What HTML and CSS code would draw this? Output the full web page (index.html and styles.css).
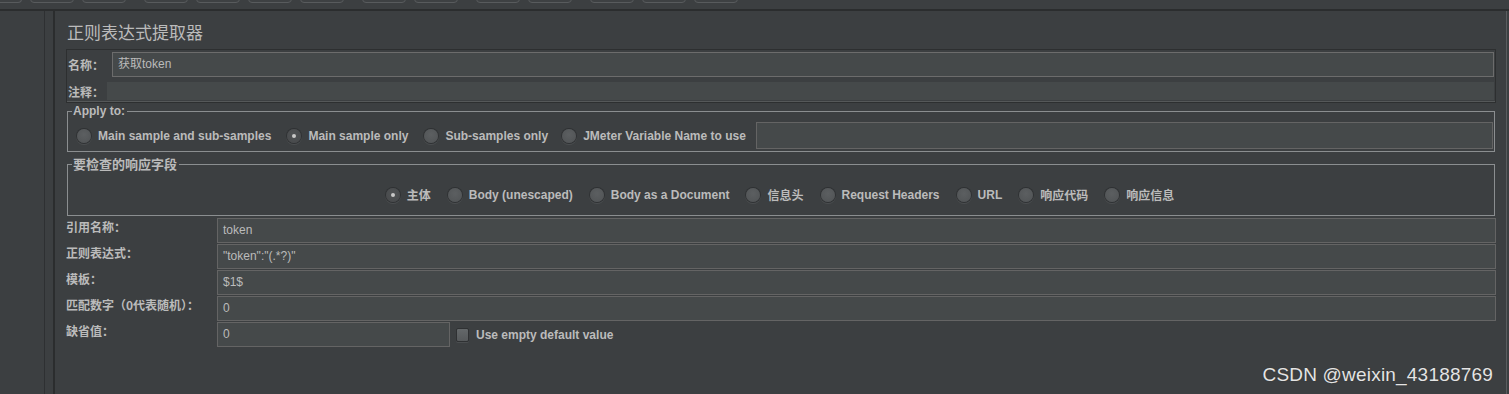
FILE: index.html
```html
<!DOCTYPE html>
<html lang="zh">
<head>
<meta charset="utf-8">
<title>正则表达式提取器</title>
<link rel="stylesheet" href="styles.css">
</head>
<body>
<div class="toolbar">
  <span class="tb first"></span>
  <span class="tb"></span>
  <span class="tb"></span>
  <span class="tb grp"></span>
  <span class="tb"></span>
  <span class="tb"></span>
  <span class="tb"></span>
  <span class="tb grp"></span>
  <span class="tb"></span>
  <span class="tb grp"></span>
  <span class="tb"></span>
  <span class="tb grp"></span>
  <span class="tb"></span>
  <span class="tb"></span>
</div>
<div class="hsep"></div>
<div class="workspace">
  <div class="tree"></div>
  <div class="split"></div>
  <div class="main">
    <div class="title">正则表达式提取器</div>

    <div class="namebox">
      <div class="nrow">
        <span class="nlabel">名称：</span>
        <div class="field namefield">获取token</div>
      </div>
      <div class="nrow crow">
        <span class="nlabel clabel">注释：</span>
        <div class="field commentfield"></div>
      </div>
    </div>

    <fieldset class="group apply">
      <legend>Apply to:</legend>
      <div class="opts">
        <span class="opt"><span class="radio"></span>Main sample and sub-samples</span>
        <span class="opt"><span class="radio on"></span>Main sample only</span>
        <span class="opt"><span class="radio"></span>Sub-samples only</span>
        <span class="opt"><span class="radio"></span>JMeter Variable Name to use</span>
        <div class="field varfield"></div>
      </div>
    </fieldset>

    <fieldset class="group fields">
      <legend class="cjk">要检查的响应字段</legend>
      <div class="opts center">
        <span class="opt"><span class="radio on"></span><span class="cjk">主体</span></span>
        <span class="opt"><span class="radio"></span>Body (unescaped)</span>
        <span class="opt"><span class="radio"></span>Body as a Document</span>
        <span class="opt"><span class="radio"></span><span class="cjk">信息头</span></span>
        <span class="opt"><span class="radio"></span>Request Headers</span>
        <span class="opt"><span class="radio"></span>URL</span>
        <span class="opt"><span class="radio"></span><span class="cjk">响应代码</span></span>
        <span class="opt"><span class="radio"></span><span class="cjk">响应信息</span></span>
      </div>
    </fieldset>

    <div class="form">
      <span class="flabel">引用名称：</span>
      <div class="field">token</div>
      <span class="flabel">正则表达式：</span>
      <div class="field">"token":"(.*?)"</div>
      <span class="flabel">模板：</span>
      <div class="field">$1$</div>
      <span class="flabel">匹配数字（0代表随机）：</span>
      <div class="field">0</div>
      <span class="flabel">缺省值：</span>
      <div class="lastrow">
        <div class="field shortfield">0</div>
        <span class="check"></span>
        <span class="checktext">Use empty default value</span>
      </div>
    </div>
  </div>
</div>
<div class="watermark">CSDN @weixin_43188769</div>
</body>
</html>
```

FILE: styles.css
```css
html, body {
  margin: 0;
  padding: 0;
}
body {
  width: 1509px;
  height: 394px;
  overflow: hidden;
  background: #3c3f41;
  color: #bbbbbb;
  font-family: "Liberation Sans", Arial, "Noto Sans CJK SC", sans-serif;
  font-size: 12px;
  position: relative;
}

.toolbar {
  height: 9px;
  display: flex;
  gap: 8px;
  overflow: hidden;
}
.tb {
  flex: none;
  width: 44px;
  height: 14px;
  margin-top: -11px;
  box-sizing: border-box;
  border: 1px solid #585b5d;
  border-radius: 4px;
  background: #3e4143;
}
.tb.first {
  width: 23px;
  margin-left: -1px;
  border-left: none;
  border-top-left-radius: 0;
  border-bottom-left-radius: 0;
}
.tb.grp {
  margin-left: 10px;
}
.hsep {
  height: 2px;
  background: #2b2d2e;
}

.workspace {
  display: flex;
  height: 383px;
}
.tree {
  width: 44px;
  flex: none;
  border-right: 1px solid #2e3032;
}
.split {
  width: 8px;
  flex: none;
}
.main {
  flex: 1;
  margin-right: 2px;
  border-left: 2px solid #2b2d2e;
  border-right: 1px solid #5a5d5f;
  padding: 0 10px 0 11px;
}

.title {
  padding-top: 3px;
  height: 35px;
  line-height: 35px;
  font-size: 17px;
  font-family: "Noto Sans CJK SC", sans-serif;
  color: #bbbbbb;
  padding-left: 1px;
}

.cjk {
  font-family: "Noto Sans CJK SC", sans-serif;
}

.namebox {
  border: 1px solid #2d2f30;
  box-shadow: inset 0 -1px 0 #555859;
  padding: 2px 1px 2px 0;
}
.nrow {
  display: flex;
  align-items: center;
  height: 25px;
}
.crow {
  height: 18px;
  margin-top: 5px;
}
.nlabel {
  width: 45px;
  flex: none;
  font-family: "Noto Sans CJK SC", sans-serif;
  font-weight: bold;
  font-size: 12px;
  padding-left: 1px;
  box-sizing: border-box;
}
.clabel {
  width: 40px;
}

.field {
  box-sizing: border-box;
  height: 25px;
  line-height: 23px;
  background: #45494a;
  border: 1px solid #646464;
  padding-left: 5px;
  color: #bbbbbb;
  font-size: 12px;
  font-family: "Liberation Sans", Arial, "Noto Sans CJK SC", sans-serif;
  white-space: nowrap;
}
.namefield {
  flex: 1;
  border-color: #6c6c6c;
  padding-left: 5px;
}
.commentfield {
  flex: 1;
  height: 18px;
  border: none;
}

.group {
  margin: 1px 1px 0 1px;
  border: 1px solid #8b8e90;
  padding: 0 1px 2px 9px;
  min-width: 0;
}
.group legend {
  margin-left: -5px;
  padding: 0 2px 0 1px;
  font-weight: bold;
  font-size: 12px;
  line-height: 14px;
  color: #bbbbbb;
}
.group legend.cjk {
  font-size: 13px;
}
.apply .opts {
  margin-top: 4px;
}
.opts {
  display: flex;
  align-items: center;
  gap: 16px;
  font-weight: bold;
  white-space: nowrap;
}
.apply .opts .opt:nth-child(4) {
  margin-left: -2px;
}
.opts.center {
  justify-content: center;
  padding: 15px 10px 10px 0;
  gap: 17px;
}
.opt {
  display: flex;
  align-items: center;
  gap: 7px;
}
.radio {
  width: 14px;
  height: 14px;
  box-sizing: border-box;
  border-radius: 50%;
  background: radial-gradient(circle at 50% 40%, #5c5f61 0%, #535658 70%, #4a4d4f 100%);
  box-shadow: 0 0 0 1px #2f3133, 0 1px 0 1px #4b4e50;
  position: relative;
  flex: none;
}
.radio.on {
  background: radial-gradient(circle at 50% 40%, #4f5254 0%, #47494b 100%);
}
.radio.on::after {
  content: "";
  position: absolute;
  left: 5px;
  top: 5px;
  width: 4px;
  height: 4px;
  border-radius: 50%;
  background: #c8c8c8;
}
.varfield {
  flex: 1;
  height: 27px;
  margin-left: -6px;
}

.fields {
  margin-top: 5px;
}

.form {
  margin-top: 2px;
  display: grid;
  grid-template-columns: 151px 1fr;
  grid-auto-rows: 25px;
  row-gap: 1px;
}
.flabel {
  font-family: "Noto Sans CJK SC", sans-serif;
  font-weight: bold;
  font-size: 12px;
  line-height: 17px;
  white-space: nowrap;
}
.lastrow {
  display: flex;
  align-items: center;
}
.shortfield {
  width: 233px;
}
.check {
  width: 13px;
  height: 14px;
  margin-left: 6px;
  box-sizing: border-box;
  border-radius: 2px;
  background: linear-gradient(#64686a, #56595b);
  border: 1px solid #2f3133;
  box-shadow: 0 1px 0 #4b4e50;
}
.checktext {
  margin-left: 7px;
  font-weight: bold;
}

.watermark {
  position: absolute;
  right: 16px;
  top: 364px;
  font-family: "Liberation Sans", Arial, sans-serif;
  font-size: 19px;
  color: #e4e4e4;
  text-shadow: 0 0 1px #2a2a2a;
  letter-spacing: 0.2px;
}
```
